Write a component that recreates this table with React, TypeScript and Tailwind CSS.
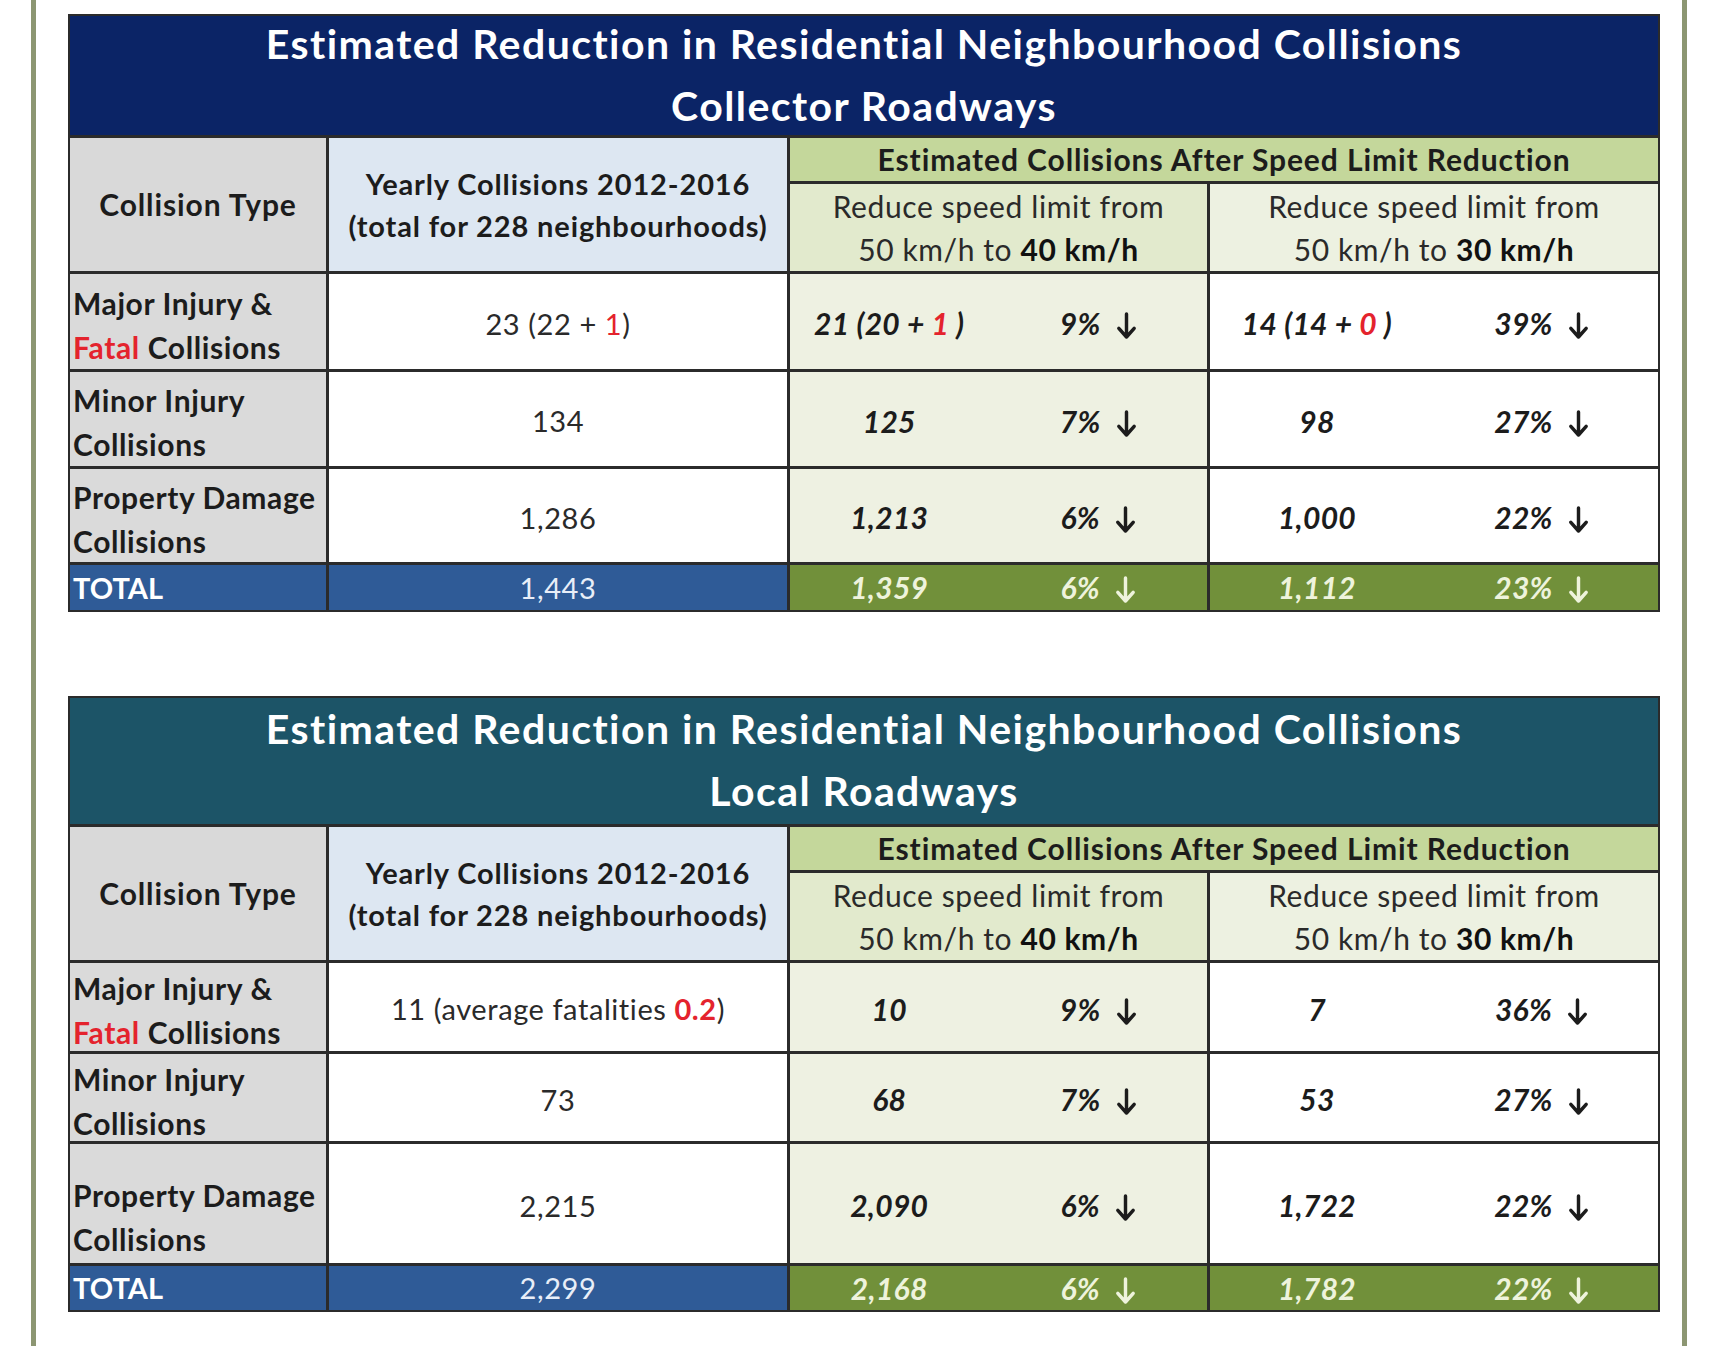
import type { ReactNode } from 'react'

const FONT = "font-['Lato','Open_Sans',sans-serif]"

function Arrow({ className = '' }: { className?: string }) {
  return (
    <svg
      viewBox="0 0 24 30"
      className={`inline-block h-[29px] w-[23px] align-[-5px] ${className}`}
      fill="none"
      stroke="currentColor"
      strokeWidth={3.6}
      strokeLinecap="round"
      strokeLinejoin="round"
    >
      <path d="M12 3v24M4 18l8 9 8-9" />
    </svg>
  )
}

const Red = ({ children }: { children: ReactNode }) => <span className="text-[#e4232d]">{children}</span>

type Row = {
  label: [ReactNode, ReactNode]
  base: ReactNode
  a: ReactNode
  aPct: string
  b: ReactNode
  bPct: string
  low?: boolean
}

type Totals = { base: string; a: string; aPct: string; b: string; bPct: string }

type TableProps = {
  subtitle: string
  titleBg: string
  rows: string
  data: Row[]
  total: Totals
}

function Pair({ value, pct, light }: { value: ReactNode; pct: string; light?: boolean }) {
  return (
    <div
      className={`grid grid-cols-2 items-center text-center text-[30px] font-bold italic tracking-[0.01em] ${
        light ? 'text-[#eef3dc]' : 'text-[#1c1c1c]'
      }`}
    >
      <span className="pr-[10px]">{value}</span>
      <span className="pr-[8px]">
        {pct}
        <Arrow className="ml-[14px]" />
      </span>
    </div>
  )
}

function CollisionTable({ subtitle, titleBg, rows, data, total }: TableProps) {
  return (
    <div className={`grid grid-cols-[256px_458px_417px_448px] ${rows} gap-[3px] bg-[#2b2b2b] p-[2px] ${FONT}`}>
      {/* title band */}
      <div
        className={`col-span-4 flex flex-col items-center justify-center text-[41px] font-bold leading-[62px] tracking-[0.035em] text-white ${titleBg}`}
      >
        <div className="-mt-[2px]">Estimated Reduction in Residential Neighbourhood Collisions</div>
        <div>{subtitle}</div>
      </div>

      {/* header */}
      <div className="row-span-2 flex items-center justify-center bg-[#d9d9d9] text-[30px] font-bold tracking-[0.03em] text-[#1c1c1c]">
        Collision Type
      </div>
      <div className="row-span-2 flex flex-col items-center justify-center bg-[#dde7f2] text-[29px] font-bold leading-[42px] tracking-[0.03em] text-[#1c1c1c]">
        <div>Yearly Collisions 2012-2016</div>
        <div>(total for 228 neighbourhoods)</div>
      </div>
      <div className="col-span-2 flex items-center justify-center bg-[#c4d79b] text-[30px] font-bold tracking-[0.03em] text-[#1c1c1c]">
        Estimated Collisions After Speed Limit Reduction
      </div>
      <div className="flex flex-col items-center justify-center bg-[#e2eacd] text-[30px] leading-[43px] tracking-[0.02em] text-[#2a2a2a]">
        <div>Reduce speed limit from</div>
        <div>
          50 km/h to <b className="text-[#111]">40 km/h</b>
        </div>
      </div>
      <div className="flex flex-col items-center justify-center bg-[#edf1e1] text-[30px] leading-[43px] tracking-[0.02em] text-[#2a2a2a]">
        <div>Reduce speed limit from</div>
        <div>
          50 km/h to <b className="text-[#111]">30 km/h</b>
        </div>
      </div>

      {/* data rows */}
      {data.map((r, i) => (
        <div key={i} className="contents">
          <div
            className={`flex flex-col bg-[#dadada] pl-[3px] text-[30px] font-bold leading-[44px] tracking-[0.02em] text-[#1c1c1c] ${
              r.low ? 'justify-end pb-[2px]' : 'justify-center pt-[6px]'
            }`}
          >
            <div>{r.label[0]}</div>
            <div>{r.label[1]}</div>
          </div>
          <div className="flex items-center justify-center bg-white pt-[4px] text-[29px] tracking-[0.02em] text-[#2a2a2a]">
            <span>{r.base}</span>
          </div>
          <div className="flex flex-col justify-center bg-[#eef1e2] pt-[4px]">
            <Pair value={r.a} pct={r.aPct} />
          </div>
          <div className="flex flex-col justify-center bg-white pt-[4px]">
            <Pair value={r.b} pct={r.bPct} />
          </div>
        </div>
      ))}

      {/* total */}
      <div className="flex items-center bg-[#2f5b97] pl-[3px] text-[29px] font-bold text-white">TOTAL</div>
      <div className="flex items-center justify-center bg-[#2f5b97] text-[29px] tracking-[0.02em] text-[#e8eef8]">
        {total.base}
      </div>
      <div className="flex flex-col justify-center bg-[#71903a]">
        <Pair value={total.a} pct={total.aPct} light />
      </div>
      <div className="flex flex-col justify-center bg-[#71903a]">
        <Pair value={total.b} pct={total.bPct} light />
      </div>
    </div>
  )
}

const majorLabel: [ReactNode, ReactNode] = [
  'Major Injury &',
  <>
    <Red>Fatal</Red> Collisions
  </>,
]

const collector: Row[] = [
  {
    label: majorLabel,
    base: (
      <>
        23 (22 +{' '}<Red>1</Red>)
      </>
    ),
    a: (
      <>
        21 (20 +{' '}<Red>1</Red> )
      </>
    ),
    aPct: '9%',
    b: (
      <>
        14 (14 +{' '}<Red>0</Red> )
      </>
    ),
    bPct: '39%',
  },
  { label: ['Minor Injury', 'Collisions'], base: '134', a: '125', aPct: '7%', b: '98', bPct: '27%' },
  { label: ['Property Damage', 'Collisions'], base: '1,286', a: '1,213', aPct: '6%', b: '1,000', bPct: '22%' },
]

const local: Row[] = [
  {
    label: majorLabel,
    base: (
      <>
        11 (average fatalities{' '}<b className="text-[#e4232d]">0.2</b>)
      </>
    ),
    a: '10',
    aPct: '9%',
    b: '7',
    bPct: '36%',
  },
  { label: ['Minor Injury', 'Collisions'], base: '73', a: '68', aPct: '7%', b: '53', bPct: '27%' },
  { label: ['Property Damage', 'Collisions'], base: '2,215', a: '2,090', aPct: '6%', b: '1,722', bPct: '22%', low: true },
]

export default function App() {
  return (
    <div className="flex min-h-[1346px] w-full bg-white">
      <div className="w-[31px] shrink-0" />
      <div className="w-[5px] shrink-0 bg-[#8c9672]" />
      <div className="flex w-[1646px] shrink-0 flex-col pl-[32px] pt-[14px]">
        <div className="w-[1592px]">
          <CollisionTable
            subtitle="Collector Roadways"
            titleBg="bg-[#0b2466]"
            rows="grid-rows-[119px_43px_87px_95px_94px_93px_45px]"
            data={collector}
            total={{ base: '1,443', a: '1,359', aPct: '6%', b: '1,112', bPct: '23%' }}
          />
        </div>
        <div className="mt-[84px] w-[1592px]">
          <CollisionTable
            subtitle="Local Roadways"
            titleBg="bg-[#1c5467]"
            rows="grid-rows-[126px_43px_87px_88px_87px_119px_44px]"
            data={local}
            total={{ base: '2,299', a: '2,168', aPct: '6%', b: '1,782', bPct: '22%' }}
          />
        </div>
      </div>
      <div className="w-[5px] shrink-0 bg-[#8c9672]" />
      <div className="flex-1" />
    </div>
  )
}
